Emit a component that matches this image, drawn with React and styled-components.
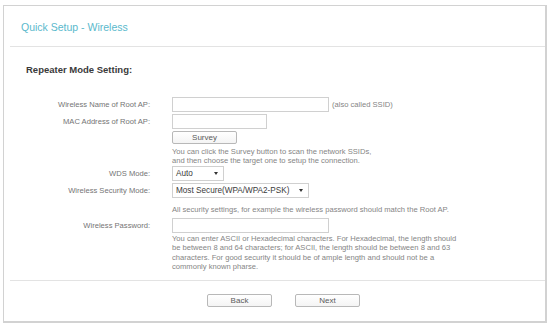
import React from 'react'
import styled, { createGlobalStyle } from 'styled-components'

const Global = createGlobalStyle`
  html, body { margin: 0; padding: 0; background: #fff; }
  body { font-family: "Liberation Sans", Arial, sans-serif; }
`

const Page = styled.div`
  width: 554px;
  height: 330px;
  padding: 5px 0 0 3px;
  box-sizing: border-box;
`

const Panel = styled.div`
  width: 544px;
  height: 318px;
  box-sizing: border-box;
  border: 1px solid #d2d2d2;
  border-right-width: 2px;
  border-bottom-width: 2px;
  display: flex;
  flex-direction: column;
`

const Header = styled.div`
  height: 41px;
  margin-left: 6px;
  border-bottom: 1px solid #e3e3e3;
  display: flex;
  align-items: center;
  padding-left: 11px;
  padding-top: 1px;
  box-sizing: border-box;
  color: #5ab9cc;
  font-size: 10.5px;
`

const Body = styled.div`
  display: flex;
  flex-direction: column;
  height: 234px;
  border-bottom: 1px solid #e3e3e3;
  margin-left: 6px;
  box-sizing: border-box;
`

const SectionTitle = styled.div`
  margin: 17px 0 0 16px;
  font-size: 9.5px;
  font-weight: bold;
  color: #3a3a3a;
  height: 12px;
  line-height: 12px;
`

const Rows = styled.div`
  display: flex;
  flex-direction: column;
  margin-top: 21px;
  margin-left: -6px;
`

const Row = styled.div`
  display: grid;
  grid-template-columns: 146px 1fr;
  column-gap: 22px;
  align-items: start;
  margin-top: ${p => p.$top || 0}px;
`

const Label = styled.div`
  text-align: right;
  font-size: 7.6px;
  color: #747474;
  line-height: 15px;
  height: 15px;
`

const Field = styled.div`
  display: flex;
  flex-direction: column;
  align-items: flex-start;
`

const Inline = styled.div`
  display: flex;
  align-items: center;
  gap: 3px;
`

const Input = styled.div`
  width: ${p => p.$w}px;
  height: 15px;
  box-sizing: border-box;
  border: 1px solid #d0d0d0;
  background: #fff;
`

const Note = styled.div`
  font-size: 7.6px;
  color: #858585;
  line-height: ${p => p.$lh || 9}px;
  margin-top: ${p => p.$top || 0}px;
  white-space: nowrap;
`

const Select = styled.div`
  width: ${p => p.$w}px;
  height: 15px;
  box-sizing: border-box;
  border: 1px solid #d0d0d0;
  display: flex;
  align-items: center;
  justify-content: space-between;
  padding: 0 5px 0 3px;
  font-size: 8.2px;
  color: #3a3a3a;
  &::after {
    content: "";
    border-left: 2px solid transparent;
    border-right: 2px solid transparent;
    border-top: 3px solid #333;
  }
`

const Button = styled.div`
  width: ${p => p.$w}px;
  height: 13px;
  box-sizing: border-box;
  border: 1px solid #b8b8b8;
  border-radius: 2px;
  background: linear-gradient(#fff, #f4f4f4);
  display: flex;
  align-items: center;
  justify-content: center;
  font-size: 8px;
  color: #5a5a5a;
`

const Footer = styled.div`
  display: flex;
  gap: 23px;
  padding: 13px 0 0 203px;
`

export default function App() {
  return (
    <Page>
      <Global />
      <Panel>
        <Header>Quick Setup - Wireless</Header>
        <Body>
          <SectionTitle>Repeater Mode Setting:</SectionTitle>
          <Rows>
            <Row>
              <Label>Wireless Name of Root AP:</Label>
              <Field>
                <Inline>
                  <Input $w={157} />
                  <Note>(also called SSID)</Note>
                </Inline>
              </Field>
            </Row>
            <Row $top={2}>
              <Label>MAC Address of Root AP:</Label>
              <Field><Input $w={95} /></Field>
            </Row>
            <Row $top={2}>
              <Label />
              <Field>
                <Button $w={65}>Survey</Button>
                <Note $top={3}>
                  You can click the Survey button to scan the network SSIDs,<br />
                  and then choose the target one to setup the connection.
                </Note>
              </Field>
            </Row>
            <Row $top={1}>
              <Label>WDS Mode:</Label>
              <Field><Select $w={52}>Auto</Select></Field>
            </Row>
            <Row $top={2}>
              <Label>Wireless Security Mode:</Label>
              <Field>
                <Select $w={137}>Most Secure(WPA/WPA2-PSK)</Select>
                <Note $top={7}>All security settings, for example the wireless password should match the Root AP.</Note>
              </Field>
            </Row>
            <Row $top={4}>
              <Label>Wireless Password:</Label>
              <Field>
                <Input $w={157} />
                <Note $top={1} $lh={9.3}>
                  You can enter ASCII or Hexadecimal characters. For Hexadecimal, the length should<br />
                  be between 8 and 64 characters; for ASCII, the length should be between 8 and 63<br />
                  characters. For good security it should be of ample length and should not be a<br />
                  commonly known pharse.
                </Note>
              </Field>
            </Row>
          </Rows>
        </Body>
        <Footer>
          <Button $w={65}>Back</Button>
          <Button $w={65}>Next</Button>
        </Footer>
      </Panel>
    </Page>
  )
}
